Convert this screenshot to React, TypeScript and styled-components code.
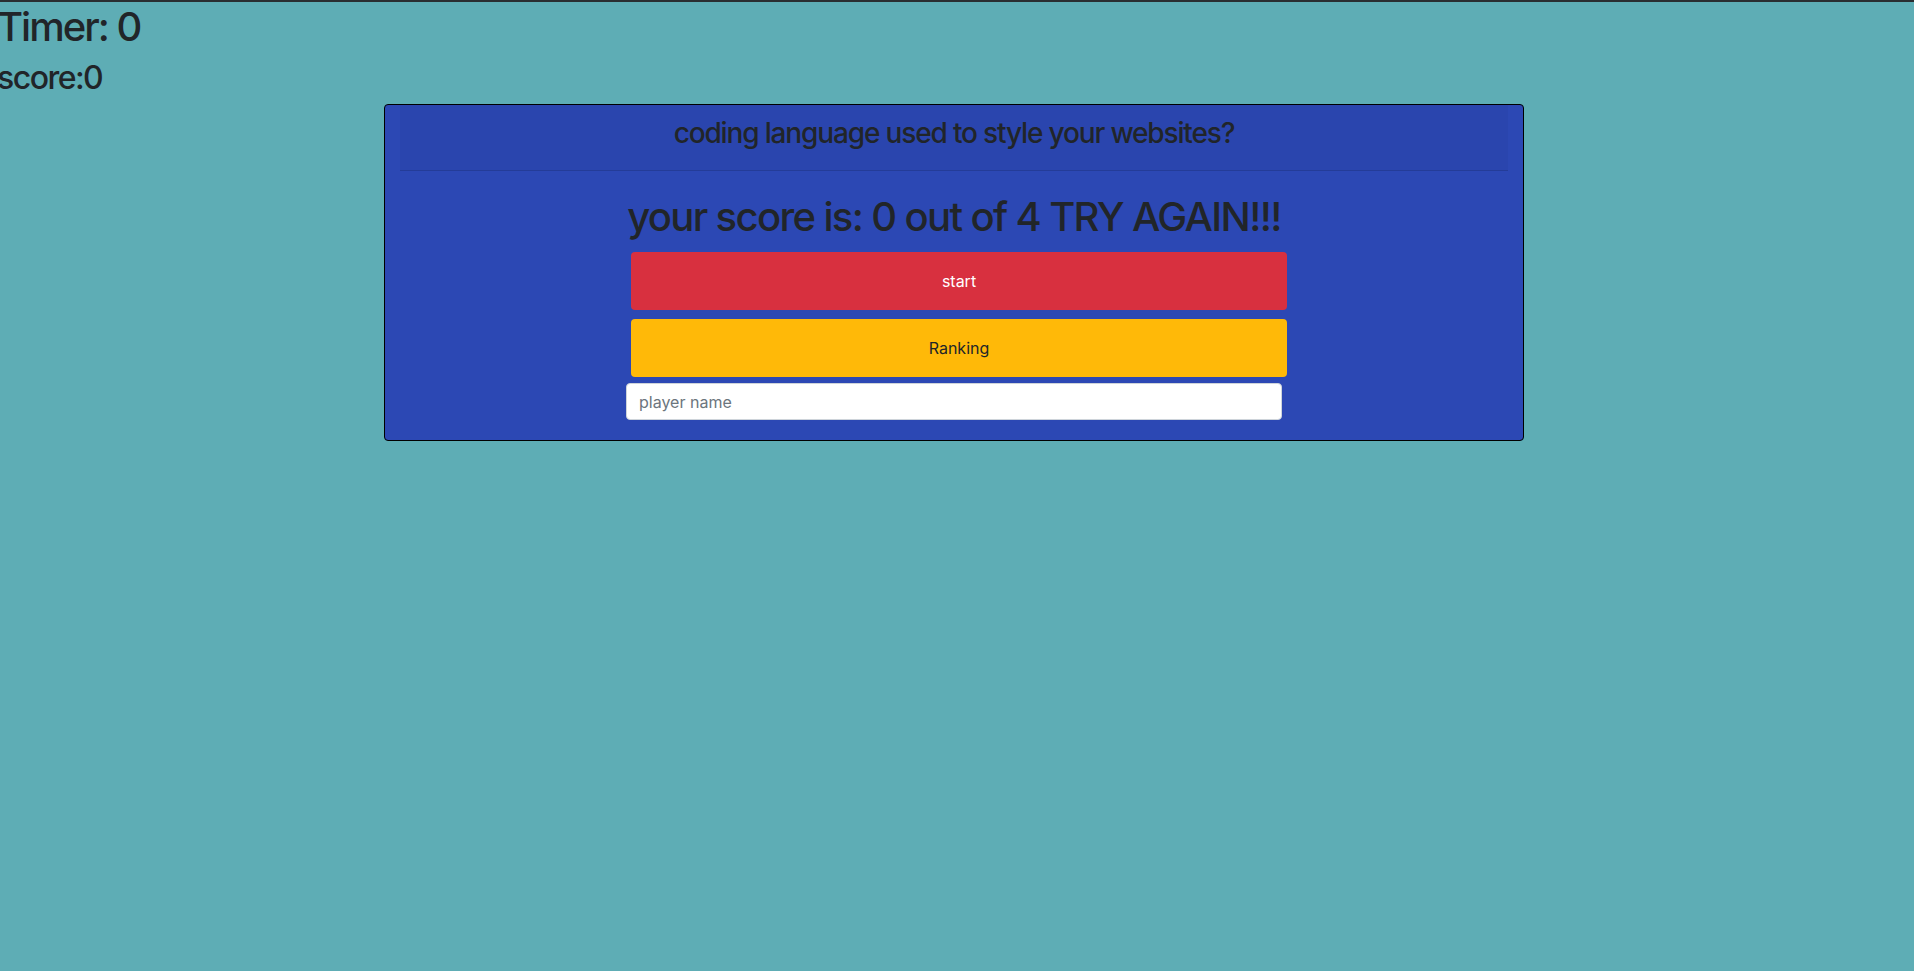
import React from "react";
import styled, { createGlobalStyle } from "styled-components";

const GlobalStyle = createGlobalStyle`
  * { box-sizing: border-box; }
  html, body {
    margin: 0;
    padding: 0;
    background: #5eadb5;
  }
  body {
    border-top: 2px solid #2a2e31;
    font-family: Inter, "Noto Sans", "Liberation Sans", Arial, sans-serif;
    color: #212529;
    font-size: 16px;
    line-height: 1.5;
    overflow: hidden;
  }
`;

const Page = styled.div`
  margin-left: -3px;
  margin-right: 3px;
`;

const TimerTitle = styled.h1`
  margin: 0 0 8px;
  padding-top: 1px;
  font-size: 40px;
  line-height: 48px;
  font-weight: 500;
  letter-spacing: -0.05em;
  color: #212529;
`;

const ScoreTitle = styled.h2`
  margin: 0 0 7px;
  font-size: 32px;
  line-height: 38.4px;
  font-weight: 500;
  letter-spacing: -0.048em;
  color: #212529;
`;

const Card = styled.section`
  width: 1140px;
  margin: 0 auto;
  background: #2c48b4;
  border: 1px solid #000;
  border-radius: 4px;
  padding: 0 15px;
`;

const CardHeader = styled.header`
  padding: 12px 20px 11px;
  background: rgba(0, 0, 0, 0.03);
  border-bottom: 1px solid rgba(0, 0, 0, 0.125);
  text-align: center;
`;

const Question = styled.h3`
  margin: 0 0 8px;
  font-size: 28px;
  line-height: 33.6px;
  font-weight: 500;
  letter-spacing: -0.041em;
  color: #212529;
`;

const CardBody = styled.div`
  padding: 22px 0 20px;
  display: flex;
  flex-direction: column;
  align-items: center;
`;

const Result = styled.h1`
  margin: 0 0 11px;
  font-size: 40px;
  line-height: 48px;
  font-weight: 500;
  letter-spacing: -0.041em;
  color: #212529;
  text-align: center;
`;

const Stack = styled.div`
  width: 656px;
  display: flex;
  flex-direction: column;
`;

const ActionButton = styled.button<{ $variant: "danger" | "warning" }>`
  height: 58px;
  margin: 0 -5px 0 5px;
  border: 1px solid transparent;
  border-radius: 4px;
  font-family: inherit;
  font-size: 16px;
  font-weight: 400;
  line-height: 1.5;
  cursor: pointer;
  background: ${(p) => (p.$variant === "danger" ? "#d8303f" : "#ffb908")};
  color: ${(p) => (p.$variant === "danger" ? "#ffffff" : "#212529")};
  & + & {
    margin-top: 9px;
  }
`;

const NameInput = styled.input`
  margin-top: 6px;
  height: 37px;
  padding: 6px 12px;
  border: 1px solid #ced4da;
  border-radius: 4px;
  background: #fff;
  font-family: inherit;
  font-size: 16px;
  color: #495057;
  &::placeholder {
    color: #6c757d;
  }
`;

export default function App() {
  return (
    <>
      <GlobalStyle />
      <Page>
        <TimerTitle>Timer: 0</TimerTitle>
        <ScoreTitle>score:0</ScoreTitle>
        <Card>
          <CardHeader>
            <Question>coding language used to style your websites?</Question>
          </CardHeader>
          <CardBody>
            <Result>your score is: 0 out of 4 TRY AGAIN!!!</Result>
            <Stack>
              <ActionButton $variant="danger">start</ActionButton>
              <ActionButton $variant="warning">Ranking</ActionButton>
              <NameInput placeholder="player name" />
            </Stack>
          </CardBody>
        </Card>
      </Page>
    </>
  );
}
